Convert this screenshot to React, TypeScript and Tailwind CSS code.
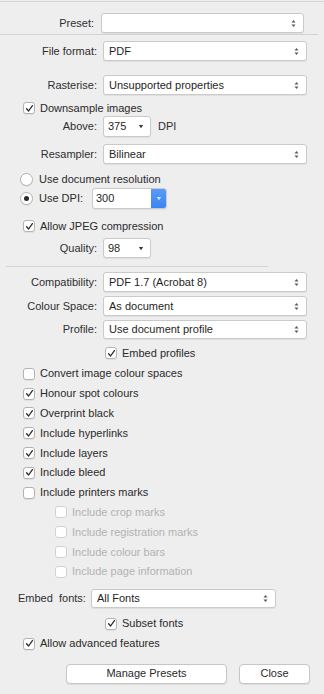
import React from "react";

const font = { fontFamily: '"Liberation Sans", Arial, sans-serif' };

function Stepper() {
  return (
    <svg width="5" height="9" viewBox="0 0 5 9" className="shrink-0">
      <path d="M2.5 1 L4.5 3.5 L0.5 3.5 Z" fill="#5a5a5a" />
      <path d="M2.5 8 L4.5 5.5 L0.5 5.5 Z" fill="#5a5a5a" />
    </svg>
  );
}

function Caret() {
  return (
    <svg width="6" height="5" viewBox="0 0 6 5" className="shrink-0">
      <path d="M0.8 1 L5.2 1 L3 4.2 Z" fill="#3a3a3a" />
    </svg>
  );
}

function Select({ value, w, h = 20 }: { value: string; w: number; h?: number }) {
  return (
    <div
      className="flex items-center justify-between bg-white border border-[#cacaca] rounded-[3px] shadow-[0_1px_1px_rgba(0,0,0,0.07)] pl-[5px] pr-[7px] text-[#1f1f1f]"
      style={{ width: w, height: h }}
    >
      <span>{value}</span>
      <Stepper />
    </div>
  );
}

function Check({ on, disabled }: { on?: boolean; disabled?: boolean }) {
  return (
    <div
      className={
        "w-[12px] h-[12px] rounded-[3px] border bg-white flex items-center justify-center shrink-0 " +
        (disabled ? "border-[#d2d2d2]" : "border-[#b3b3b3] shadow-[0_1px_0_rgba(0,0,0,0.06)]")
      }
    >
      {on && (
        <svg width="9" height="9" viewBox="0 0 9 9">
          <path d="M1.6 4.8 L3.6 7 L7.4 1.6" stroke="#2a2a2a" strokeWidth="1.3" fill="none" strokeLinecap="round" strokeLinejoin="round" />
        </svg>
      )}
    </div>
  );
}

function Radio({ on }: { on?: boolean }) {
  return (
    <div className="w-[13px] h-[13px] rounded-full border border-[#b3b3b3] bg-white flex items-center justify-center shrink-0 shadow-[0_1px_0_rgba(0,0,0,0.06)]">
      {on && <div className="w-[5px] h-[5px] rounded-full bg-[#2a2a2a]" />}
    </div>
  );
}

function CheckRow({ label, on, indent, disabled }: { label: string; on?: boolean; indent: number; disabled?: boolean }) {
  return (
    <div className="flex items-center h-[19.8px]" style={{ paddingLeft: indent }}>
      <Check on={on} disabled={disabled} />
      <span className={"ml-[5px] " + (disabled ? "text-[#b2b2b2]" : "text-[#2a2a2a]")}>{label}</span>
    </div>
  );
}

function LabelRow({ label, children, lw = 97, gap = 6 }: { label: string; children: React.ReactNode; lw?: number; gap?: number }) {
  return (
    <div className="flex items-center">
      <div className="text-right text-[#2e2e2e] shrink-0" style={{ width: lw }}>
        {label}
      </div>
      <div className="flex items-center" style={{ marginLeft: gap }}>
        {children}
      </div>
    </div>
  );
}

const options = [
  { label: "Convert image colour spaces", on: false },
  { label: "Honour spot colours", on: true },
  { label: "Overprint black", on: true },
  { label: "Include hyperlinks", on: true },
  { label: "Include layers", on: true },
  { label: "Include bleed", on: true },
  { label: "Include printers marks", on: false },
];

const marks = [
  "Include crop marks",
  "Include registration marks",
  "Include colour bars",
  "Include page information",
];

export default function App() {
  return (
    <div className="w-[324px] h-[694px] bg-[#eeeeee] text-[11px] leading-none overflow-hidden" style={font}>
      <div className="flex flex-col">
        <div className="h-px bg-[#d3d3d3] mt-px" />

        {/* Preset */}
        <div className="mt-[11px]">
          <LabelRow label="Preset:" lw={94} gap={7}>
            <Select value="" w={203} />
          </LabelRow>
        </div>
        <div className="mt-[1px] h-px bg-[#d3d3d3] w-[318px]" />

        {/* Format */}
        <div className="mt-[6px]">
          <LabelRow label="File format:">
            <Select value="PDF" w={204} />
          </LabelRow>
        </div>
        <div className="mt-[14px]">
          <LabelRow label="Rasterise:">
            <Select value="Unsupported properties" w={204} />
          </LabelRow>
        </div>

        <div className="mt-[6px] h-[14px] flex items-center pl-[23px]">
          <Check on />
          <span className="ml-[5px] text-[#2a2a2a]">Downsample images</span>
        </div>

        <div className="mt-[1px]">
          <LabelRow label="Above:">
            <div className="w-[48px] h-[21px] flex items-center justify-between bg-white border border-[#cacaca] rounded-[3px] pl-[4px] pr-[6px] shadow-[0_1px_1px_rgba(0,0,0,0.07)]">
              <span className="text-[#1f1f1f]">375</span>
              <Caret />
            </div>
            <span className="ml-[7px] text-[#2e2e2e]">DPI</span>
          </LabelRow>
        </div>

        <div className="mt-[7px]">
          <LabelRow label="Resampler:">
            <Select value="Bilinear" w={204} />
          </LabelRow>
        </div>

        <div className="mt-[8px] h-[14px] flex items-center pl-[20px]">
          <Radio />
          <span className="ml-[6px] text-[#2a2a2a]">Use document resolution</span>
        </div>

        <div className="mt-[2px] h-[21px] flex items-center pl-[20px]">
          <Radio on />
          <span className="ml-[6px] text-[#2a2a2a] w-[53px]">Use DPI:</span>
          <div className="w-[75px] h-[21px] flex bg-white border border-[#cacaca] rounded-[3px] overflow-hidden shadow-[0_1px_1px_rgba(0,0,0,0.07)]">
            <span className="flex-1 flex items-center pl-[3px] text-[#1f1f1f]">300</span>
            <div className="w-[15px] h-full bg-gradient-to-b from-[#5a9bf8] to-[#3a84f3] flex items-center justify-center">
              <svg width="6" height="5" viewBox="0 0 6 5">
                <path d="M0.8 1 L5.2 1 L3 4.2 Z" fill="#dbe8fd" />
              </svg>
            </div>
          </div>
        </div>

        <div className="mt-[10px] h-[14px] flex items-center pl-[23px]">
          <Check on />
          <span className="ml-[5px] text-[#2a2a2a]">Allow JPEG compression</span>
        </div>

        <div className="mt-[5px]">
          <LabelRow label="Quality:">
            <div className="w-[48px] h-[20px] flex items-center justify-between bg-white border border-[#cacaca] rounded-[3px] pl-[4px] pr-[6px] shadow-[0_1px_1px_rgba(0,0,0,0.07)]">
              <span className="text-[#1f1f1f]">98</span>
              <Caret />
            </div>
          </LabelRow>
        </div>

        <div className="mt-[8px] h-px bg-[#d3d3d3] ml-[6px] w-[262px]" />

        {/* Compatibility */}
        <div className="mt-[5px]">
          <LabelRow label="Compatibility:">
            <Select value="PDF 1.7 (Acrobat 8)" w={204} />
          </LabelRow>
        </div>
        <div className="mt-[4px]">
          <LabelRow label="Colour Space:">
            <Select value="As document" w={204} />
          </LabelRow>
        </div>
        <div className="mt-[4px]">
          <LabelRow label="Profile:">
            <Select value="Use document profile" w={204} h={19} />
          </LabelRow>
        </div>

        <div className="mt-[7px] h-[14px] flex items-center pl-[105px]">
          <Check on />
          <span className="ml-[5px] text-[#2a2a2a]">Embed profiles</span>
        </div>

        <div className="mt-[4px] flex flex-col">
          {options.map((o) => (
            <CheckRow key={o.label} label={o.label} on={o.on} indent={23} />
          ))}
          {marks.map((m) => (
            <CheckRow key={m} label={m} indent={55} disabled />
          ))}
        </div>

        <div className="mt-[7px] flex items-center">
          <span className="ml-[18px] w-[67px] text-[#2e2e2e] whitespace-pre">Embed  fonts:</span>
          <div className="ml-[6px]">
            <Select value="All Fonts" w={185} h={19} />
          </div>
        </div>

        <div className="mt-[9px] h-[14px] flex items-center pl-[105px]">
          <Check on />
          <span className="ml-[5px] text-[#2a2a2a]">Subset fonts</span>
        </div>

        <div className="mt-[6px] h-[14px] flex items-center pl-[23px]">
          <Check on />
          <span className="ml-[5px] text-[#2a2a2a]">Allow advanced features</span>
        </div>

        <div className="mt-[13px] flex pl-[66px] gap-[12px]">
          <button className="w-[161px] h-[20px] bg-white border border-[#c6c6c6] rounded-[4px] shadow-[0_1px_1px_rgba(0,0,0,0.08)] text-[#2a2a2a] text-[11px]">
            Manage Presets
          </button>
          <button className="w-[71px] h-[20px] bg-white border border-[#c6c6c6] rounded-[4px] shadow-[0_1px_1px_rgba(0,0,0,0.08)] text-[#2a2a2a] text-[11px]">
            Close
          </button>
        </div>
      </div>
    </div>
  );
}
